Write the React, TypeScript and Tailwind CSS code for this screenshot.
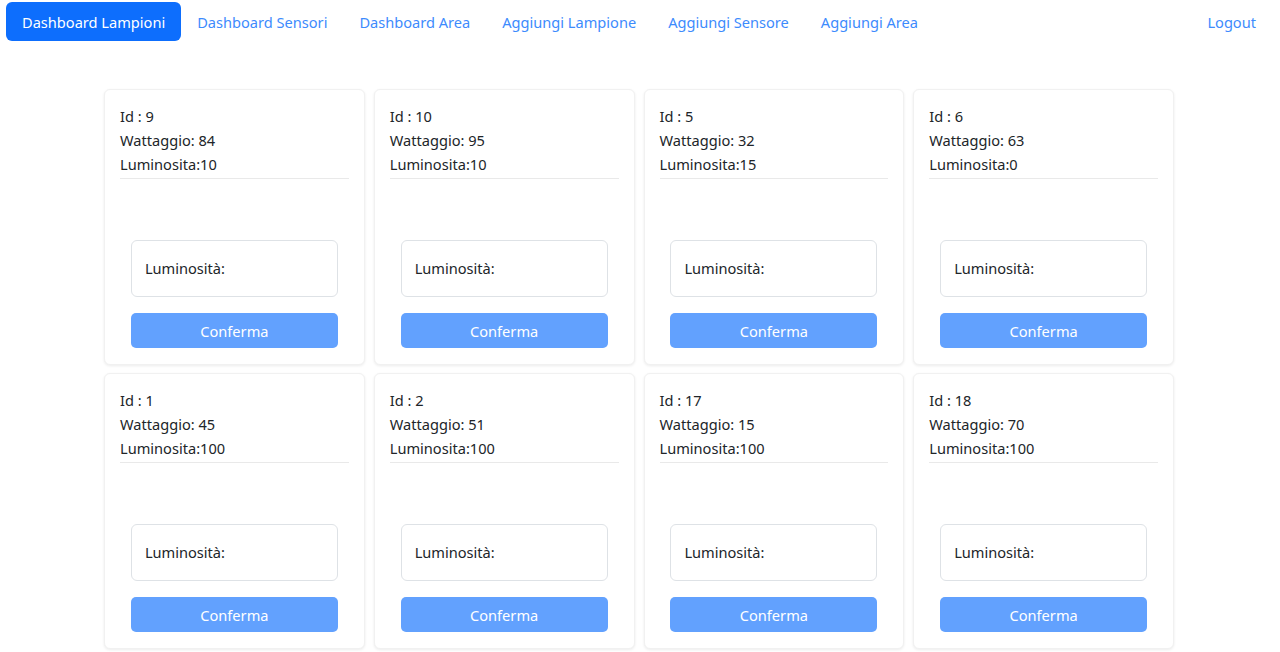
import React from 'react'

const lampioni = [
    { id: 9, watt: 84, lum: 10 },
    { id: 10, watt: 95, lum: 10 },
    { id: 5, watt: 32, lum: 15 },
    { id: 6, watt: 63, lum: 0 },
    { id: 1, watt: 45, lum: 100 },
    { id: 2, watt: 51, lum: 100 },
    { id: 17, watt: 15, lum: 100 },
    { id: 18, watt: 70, lum: 100 },
]

const links = ['Dashboard Sensori', 'Dashboard Area', 'Aggiungi Lampione', 'Aggiungi Sensore', 'Aggiungi Area']

const LampioneCard = ({ id, watt, lum }: { id: number; watt: number; lum: number }) => {
    return (
        <div className="h-[276px] bg-white rounded-[6px] border border-[#f1f1f1] shadow-[0_1px_3px_rgba(0,0,0,0.08)] px-[15px] pt-[14px] pb-[16px] flex flex-col">
            <div className="flex flex-col text-[14.6px] leading-[24px] text-[#212529]">
                <span>Id : {id}</span>
                <span>Wattaggio: {watt}</span>
                <span>Luminosita:{lum}</span>
            </div>
            <div className="mt-[2px] border-t border-[#e9e9e9]"></div>
            <div className="mt-auto flex flex-col items-center gap-[16px]">
                <div className="w-[207px] h-[57px] border border-[#dee2e6] rounded-[6px] flex items-center px-[13px] pt-[1px] text-[14.6px] text-[#212529]">
                    Luminosità:
                </div>
                <button className="w-[207px] h-[35px] rounded-[5px] bg-[#62a1fe] text-white text-[14.6px] pt-[2px]">Conferma</button>
            </div>
        </div>
    )
}

const App = () => {
    return (
        <div className="min-h-[652px] bg-white font-['Noto_Sans',sans-serif] text-[#212529]">
            <nav className="flex items-center justify-between pl-[6px] pr-[8px] pt-[2px]">
                <ul className="flex items-center">
                    <li className="h-[39px] px-[16px] pt-[2px] flex items-center rounded-[6px] bg-[#0d6efd] text-white text-[14.6px]">Dashboard Lampioni</li>
                    {links.map((l) => (
                        <li key={l} className="h-[39px] px-[16px] pt-[2px] flex items-center text-[14.6px] text-[#3d8bfd]">{l}</li>
                    ))}
                </ul>
                <span className="h-[39px] px-[16px] pt-[2px] flex items-center text-[14.6px] text-[#3d8bfd]">Logout</span>
            </nav>
            <div className="w-[1070px] ml-[104px] mt-[48px] grid grid-cols-4 gap-x-[9px] gap-y-[8px]">
                {lampioni.map((l) => (
                    <LampioneCard key={l.id} {...l} />
                ))}
            </div>
        </div>
    )
}

export default App
